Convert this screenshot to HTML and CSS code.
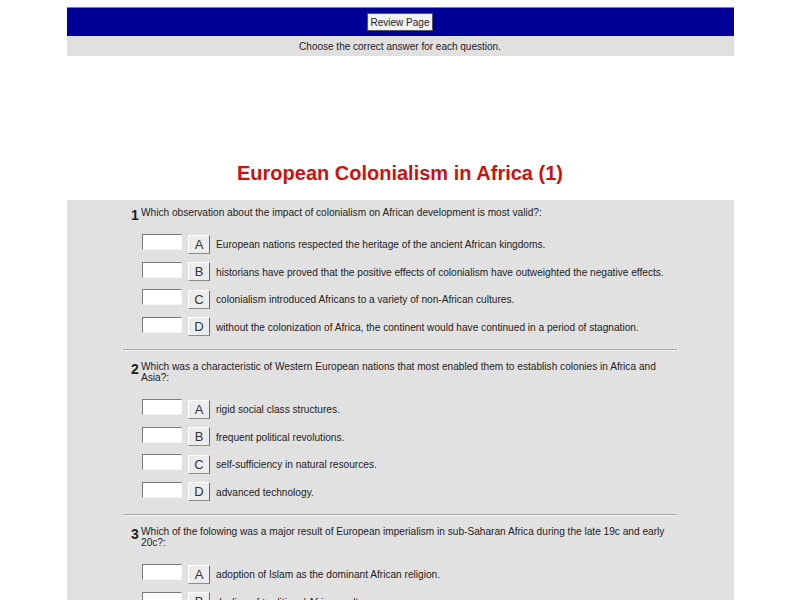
FILE: index.html
```html
<!DOCTYPE html>
<html>
<head>
<meta charset="utf-8">
<title>European Colonialism in Africa (1)</title>
<link rel="stylesheet" href="styles.css">
</head>
<body>
<div class="page">
  <div class="topbar"><button class="review">Review Page</button></div>
  <div class="instr">Choose the correct answer for each question.</div>
  <h1 class="title">European Colonialism in Africa (1)</h1>
  <div class="panel">
    <div class="inner">
      <div class="q">
        <div class="qhead"><span class="num">1</span><span class="qtext">Which observation about the impact of colonialism on African development is most valid?:</span></div>
        <div class="opts">
          <div class="opt"><span class="box"></span><span class="let">A</span><span class="otext">European nations respected the heritage of the ancient African kingdoms.</span></div>
          <div class="opt"><span class="box"></span><span class="let">B</span><span class="otext">historians have proved that the positive effects of colonialism have outweighted the negative effects.</span></div>
          <div class="opt"><span class="box"></span><span class="let">C</span><span class="otext">colonialism introduced Africans to a variety of non-African cultures.</span></div>
          <div class="opt"><span class="box"></span><span class="let">D</span><span class="otext">without the colonization of Africa, the continent would have continued in a period of stagnation.</span></div>
        </div>
      </div>
      <div class="sep"></div>
      <div class="q">
        <div class="qhead"><span class="num">2</span><span class="qtext">Which was a characteristic of Western European nations that most enabled them to establish colonies in Africa and Asia?:</span></div>
        <div class="opts">
          <div class="opt"><span class="box"></span><span class="let">A</span><span class="otext">rigid social class structures.</span></div>
          <div class="opt"><span class="box"></span><span class="let">B</span><span class="otext">frequent political revolutions.</span></div>
          <div class="opt"><span class="box"></span><span class="let">C</span><span class="otext">self-sufficiency in natural resources.</span></div>
          <div class="opt"><span class="box"></span><span class="let">D</span><span class="otext">advanced technology.</span></div>
        </div>
      </div>
      <div class="sep"></div>
      <div class="q">
        <div class="qhead"><span class="num">3</span><span class="qtext">Which of the folowing was a major result of European imperialism in sub-Saharan Africa during the late 19c and early 20c?:</span></div>
        <div class="opts">
          <div class="opt"><span class="box"></span><span class="let">A</span><span class="otext">adoption of Islam as the dominant African religion.</span></div>
          <div class="opt"><span class="box"></span><span class="let">B</span><span class="otext">decline of traditional African cultures.</span></div>
          <div class="opt"><span class="box"></span><span class="let">C</span><span class="otext">expansion of democratic governments.</span></div>
          <div class="opt"><span class="box"></span><span class="let">D</span><span class="otext">growth of African industries.</span></div>
        </div>
      </div>
    </div>
  </div>
</div>
</body>
</html>
```

FILE: styles.css
```css
html, body {
  margin: 0;
  padding: 0;
  background: #ffffff;
}
body {
  font-family: "Liberation Sans", Arial, sans-serif;
  color: #222222;
}
.page {
  width: 667px;
  margin: 0 auto;
  padding-top: 7px;
}
.topbar {
  background: #000099;
  height: 29px;
  display: flex;
  align-items: center;
  justify-content: center;
  border-top: 1px solid #7777cc;
  box-sizing: border-box;
}
.review {
  font-family: "Liberation Sans", Arial, sans-serif;
  font-size: 10px;
  color: #222222;
  background: #f2f2f2;
  border: 1px solid #555555;
  width: 66px;
  height: 18px;
  padding: 0;
  margin: 0;
  white-space: nowrap;
}
.instr {
  background: #e0e0e0;
  height: 20px;
  line-height: 21px;
  text-align: center;
  font-size: 10px;
  color: #222222;
}
.title {
  margin: 105px 0 0 0;
  height: 39px;
  font-size: 20px;
  line-height: 24px;
  font-weight: bold;
  color: #cc1111;
  text-align: center;
}
.panel {
  background: #e1e1e1;
  padding-top: 6px;
  padding-bottom: 40px;
}
.inner {
  width: 554px;
  margin: 0 auto;
}
.qhead {
  display: flex;
  align-items: flex-start;
  padding-left: 8px;
  font-size: 10.15px;
  line-height: 11px;
}
.num {
  width: 10px;
  flex: none;
  font-size: 14px;
  font-weight: bold;
  line-height: 14px;
  padding-top: 2px;
  margin-bottom: -4px;
}
.qtext {
  padding-top: 1px;
  padding-right: 10px;
}
.opts {
  margin-top: 12px;
  padding-left: 19px;
}
.opt {
  display: flex;
  align-items: center;
  height: 27.5px;
}
.box {
  width: 40px;
  height: 16px;
  box-sizing: border-box;
  background: #ffffff;
  border-top: 1px solid #7a7a7a;
  border-left: 1px solid #7a7a7a;
  border-right: 1px solid #f4f4f4;
  border-bottom: 1px solid #f4f4f4;
  margin-top: -3px;
  flex: none;
}
.let {
  width: 22px;
  height: 19px;
  box-sizing: border-box;
  margin-left: 6px;
  background: #ececec;
  border-top: 1px solid #ffffff;
  border-left: 1px solid #ffffff;
  border-right: 1px solid #6a6a6a;
  border-bottom: 1px solid #8a8a8a;
  font-size: 13px;
  line-height: 17px;
  text-align: center;
  color: #333333;
  margin-top: 1px;
  flex: none;
}
.otext {
  margin-left: 6px;
  font-size: 10.15px;
  line-height: 11px;
  padding-top: 2px;
}
.sep {
  height: 0;
  border-top: 1px solid #a8a8a8;
  border-bottom: 1px solid #f4f4f4;
  margin: 9px 0 9px 0;
}
```
